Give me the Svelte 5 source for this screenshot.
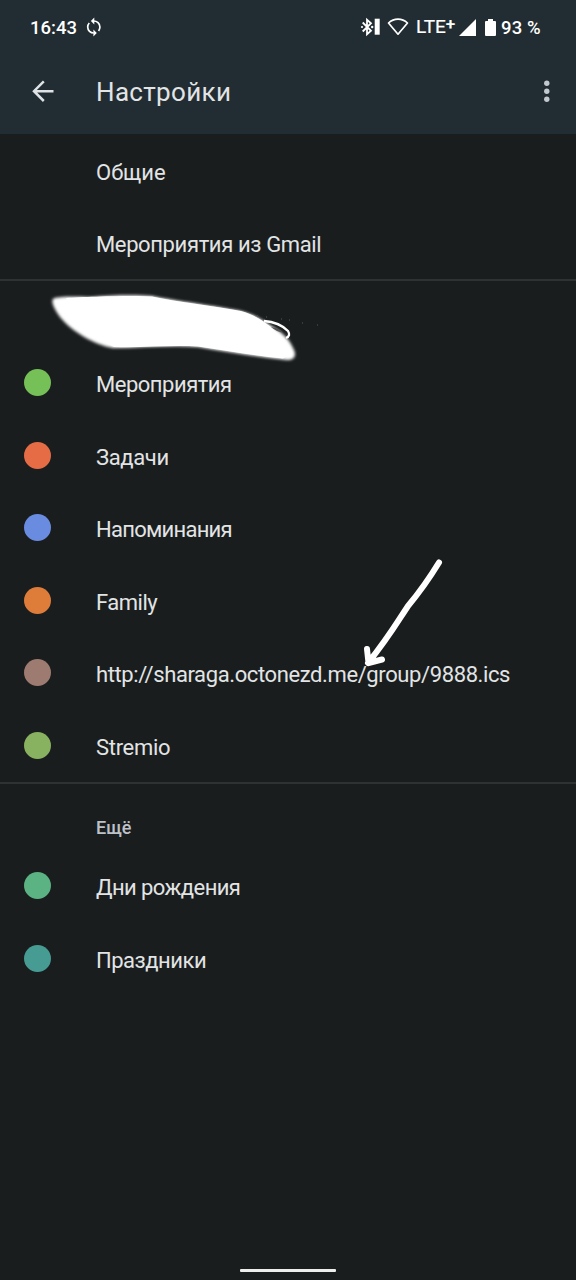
<script>
  const general = [
    { label: 'Общие', spacing: 0 },
    { label: 'Мероприятия из Gmail', spacing: -0.37 }
  ];
  const calendars = [
    { label: 'Мероприятия', color: '#76c058', spacing: -0.48 },
    { label: 'Задачи', color: '#e66c45', spacing: -0.35 },
    { label: 'Напоминания', color: '#6a8ce0', spacing: -0.74 },
    { label: 'Family', color: '#de7c3a', spacing: -0.5 },
    { label: 'http://sharaga.octonezd.me/group/9888.ics', color: '#9d7b70', spacing: -0.39 },
    { label: 'Stremio', color: '#88b160', spacing: -0.3 }
  ];
  const more = [
    { label: 'Дни рождения', color: '#5bb282', spacing: -0.58 },
    { label: 'Праздники', color: '#469c93', spacing: -0.48 }
  ];
</script>

{#snippet row(item)}
  <li class="row">
    <span class="lead">
      {#if item.color}<i class="dot" style="background: {item.color}"></i>{/if}
    </span>
    <span class="label" style="letter-spacing: {item.spacing}px">{item.label}</span>
  </li>
{/snippet}

<div class="screen">
  <header>
    <div class="status">
      <span class="time">16:43</span>
      <svg class="sync" width="18" height="20" viewBox="0 0 18 20" fill="none" stroke="#fff" stroke-width="1.7">
        <path d="M8.600 4C12 4 14.900 6.600 14.900 10c0 1.500-.5 2.800-1.300 3.900M4.300 6C3.300 7.100 2.700 8.500 2.700 10c0 3.400 2.800 6 6.100 6" />
        <path d="M9.300 .6v6.800L5.900 4zM8.400 12.600v6.800l3.400-3.400z" fill="#fff" stroke="none" />
      </svg>
      <span class="grow"></span>
      <svg class="bt" width="21" height="20" viewBox="0 0 21 20">
        <path d="M2.700 5.500l8.300 8.300-4 3.500V2.700l4 3.500-8.300 8.300" fill="none" stroke="#fff" stroke-width="1.800" />
        <circle cx="2" cy="10" r="1.100" fill="#fff" /><circle cx="12.200" cy="10" r="1.200" fill="#fff" />
        <path d="M14.700 1.700h5v16h-5z" fill="#fff" />
      </svg>
      <svg class="wifi" width="22" height="20" viewBox="0 0 22 20" fill="none" stroke="#fff" stroke-width="1.700" stroke-linejoin="round">
        <path d="M1.500 6C7 .9 15 .9 20.500 6L11 17.200z" />
      </svg>
      <span class="lte">LTE<b>+</b></span>
      <svg class="signal" width="17" height="17" viewBox="0 0 17 17"><path d="M0 17L17 0v17z" fill="#fff" /></svg>
      <svg class="battery" width="11" height="17" viewBox="0 0 11 17"><path d="M3 0h5v2h2q1 0 1 1v13q0 1-1 1H1q-1 0-1-1V3q0-1 1-1h2z" fill="#fff" /></svg>
      <span class="percent">93 %</span>
    </div>
    <div class="bar">
      <svg class="back" width="24" height="24" viewBox="0 0 24 24" fill="none" stroke="#dfe3e6" stroke-width="2.500">
        <path d="M23.500 11.200H4M13.800 1.400L4 11.200l9.800 9.800" />
      </svg>
      <h1>Настройки</h1>
      <svg class="menu" width="6" height="24" viewBox="0 0 6 24" fill="#c3c9ce">
        <circle cx="2.800" cy="3.300" r="2.700" /><circle cx="2.800" cy="11.300" r="2.700" /><circle cx="2.800" cy="19.300" r="2.700" />
      </svg>
    </div>
  </header>

  <ul>{#each general as item}{@render row(item)}{/each}</ul>
  <hr />
  <div class="account"></div>
  <ul>{#each calendars as item}{@render row(item)}{/each}</ul>
  <hr />
  <h2>Ещё</h2>
  <ul>{#each more as item}{@render row(item)}{/each}</ul>

  <svg class="marks" width="576" height="420" viewBox="0 280 576 420">
    <defs>
      <filter id="soft" x="-10%" y="-20%" width="120%" height="140%"><feGaussianBlur stdDeviation="1.800" /></filter>
    </defs>
    <path d="M53 299C58 296 74 297 92 297C112 295 138 295 152 296C176 301 216 306 241 311C256 315 264 321 273 327C283 333 289 339 293 348C297 355 295 360 287 360C258 357 228 352 198 347C169 345 141 348 113 348C95 345 72 332 60 317C54 309 51 302 53 299z" fill="#fff" filter="url(#soft)" />
    <path d="M66 298C80 297 110 296 138 296L152 296.500C178 302 216 306 241 311C255 315 263 321 271 327L284 341Q291 356 283 358.500C258 356 228 351 198 346.500C169 345 141 348 114 347C96 338 80 324 66 298z" fill="#fff" />
    <path d="M264 321Q279 322 288 331Q291 336 286 338" fill="none" stroke="#fff" stroke-width="2.400" />
    <path d="M271 327Q279 328 283 332.500Q277 332 271 327z" fill="#555" />
    <path d="M257 316h1m8 1h1m14 2h1m7 1h1m12 3h1m14 2h1" stroke="#555b5c" />
    <path d="M439 562.500C432 574 423 588 408 606C398 621 389 637 368 663M367 649L368.500 663L382 659.500" fill="none" stroke="#fff" stroke-width="6" stroke-linecap="round" stroke-linejoin="round" />
  </svg>
  <div class="home"></div>
</div>

<style>
  :global(body) { background: #1a1d1e; }
  .screen {
    position: relative;
    display: flex;
    flex-direction: column;
    width: 576px;
    height: 1280px;
    overflow: hidden;
    background: #1a1d1e;
    color: #e2e4e5;
    font-family: Roboto, sans-serif;
  }
  header { height: 134px; flex: none; background: #212d33; }
  svg { display: block; flex: none; }
  .status { display: flex; align-items: center; height: 54px; padding: 0 0 0 30px; color: #fff; }
  .time, .percent { padding-top: 1px; font-size: 18.500px; font-weight: 500; line-height: 24px; }
  .time { width: 47px; white-space: nowrap; }
  .sync { margin-left: 8px; }
  .grow { flex: 1; }
  .wifi { margin-left: 6px; }
  .lte { display: flex; width: 42px; margin-left: 7px; font-size: 19px; line-height: 24px; font-weight: 400; -webkit-text-stroke: 0.2px #fff; }
  .lte b { font-size: 17px; font-weight: 500; line-height: 18px; }
  .signal { margin-left: 1px; }
  .battery { margin-left: 9px; }
  .percent { width: 75px; margin-left: 5px; white-space: nowrap; letter-spacing: 0.15px; }
  .bar { display: flex; align-items: center; height: 75px; padding: 0 26px 0 30px; }
  h1 { flex: 1; margin: 0 0 0 42px; font-size: 26px; font-weight: 400; line-height: 32px; letter-spacing: 0.33px; }
  ul { list-style: none; margin: 0; padding: 0; }
  .row { display: flex; align-items: center; height: 72.500px; padding-left: 24px; }
  .lead { width: 72px; }
  .dot { display: block; width: 27px; height: 27px; border-radius: 50%; }
  .label { padding-top: 4.800px; font-size: 22px; line-height: 28px; white-space: nowrap; }
  hr { width: 100%; height: 2px; flex: none; margin: 0; border: 0; background: #2e3233; }
  .account { height: 65.500px; flex: none; }
  h2 { height: 66px; flex: none; box-sizing: border-box; margin: 0; padding: 32px 0 0 96px; font-size: 18px; font-weight: 500; line-height: 24px; color: #bdc1c9; }
  .marks { position: absolute; left: 0; top: 280px; }
  .home { width: 96px; height: 3px; margin: auto auto 8px; border-radius: 1px; background: #eceeee; }
</style>
